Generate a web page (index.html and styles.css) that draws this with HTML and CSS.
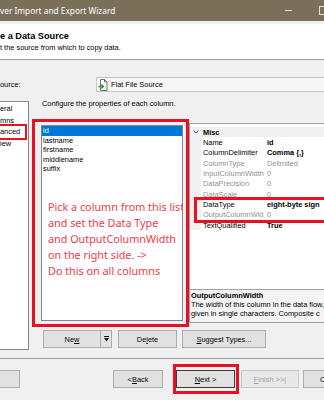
FILE: index.html
```html
<!DOCTYPE html>
<html lang="en">
<head>
    <meta charset="UTF-8">
    <title>SQL Server Import and Export Wizard</title>
    <link rel="stylesheet" href="styles.css">
</head>
<body>
<div class="window">
    <div class="titlebar">
        <span class="title">ver Import and Export Wizard</span>
        <span class="win-min"></span>
        <span class="win-max"></span>
    </div>

    <div class="header">
        <div class="header-title">e a Data Source</div>
        <div class="header-sub">t the source from which to copy data.</div>
    </div>

    <div class="body">
        <div class="source-row">
            <span class="source-label">ource:</span>
            <div class="combo">
                <svg class="combo-icon" width="10" height="12" viewBox="0 0 10 12">
                    <path d="M2.5 .5h4l2.5 2.5v8.5h-6.5z" fill="#fff" stroke="#707070"/>
                    <path d="M6.5 .5v2.5h2.5" fill="none" stroke="#707070"/>
                    <path d="M.5 7.5h4.5M3.5 5.5l2 2-2 2" fill="none" stroke="#2f9a3a" stroke-width="1.4"/>
                </svg>
                <span>Flat File Source</span>
            </div>
        </div>

        <div class="main">
            <ul class="nav">
                <li>eral</li>
                <li>mns</li>
                <li class="nav-active">anced</li>
                <li>iew</li>
            </ul>

            <div class="content">
                <p class="hint">Configure the properties of each column.</p>

                <div class="panels">
                    <div class="list-frame">
                        <div class="list">
                            <div class="list-item selected">id</div>
                            <div class="list-item">lastname</div>
                            <div class="list-item">firstname</div>
                            <div class="list-item">middlename</div>
                            <div class="list-item">suffix</div>
                            <div class="note">
                                Pick a column from this list<br>
                                and set the Data Type<br>
                                and OutputColumnWidth<br>
                                on the right side. -&gt;<br>
                                Do this on all columns
                            </div>
                        </div>
                    </div>

                    <div class="props">
                        <div class="grid">
                            <div class="prop-row group">
                                <span class="gutter">
                                    <svg width="6" height="4" viewBox="0 0 6 4"><path d="M.5 .5l2.5 2.5 2.5-2.5" fill="none" stroke="#555"/></svg>
                                </span>
                                <span class="pname strong">Misc</span>
                            </div>
                            <div class="prop-row"><span class="gutter"></span><span class="pname">Name</span><span class="pval strong">id</span></div>
                            <div class="prop-row"><span class="gutter"></span><span class="pname">ColumnDelimiter</span><span class="pval strong">Comma {,}</span></div>
                            <div class="prop-row muted"><span class="gutter"></span><span class="pname">ColumnType</span><span class="pval">Delimited</span></div>
                            <div class="prop-row muted"><span class="gutter"></span><span class="pname">InputColumnWidth</span><span class="pval">0</span></div>
                            <div class="prop-row muted"><span class="gutter"></span><span class="pname">DataPrecision</span><span class="pval">0</span></div>
                            <div class="prop-row muted"><span class="gutter"></span><span class="pname">DataScale</span><span class="pval">0</span></div>
                            <div class="prop-row"><span class="gutter"></span><span class="pname">DataType</span><span class="pval strong">eight-byte sign</span></div>
                            <div class="prop-row muted"><span class="gutter"></span><span class="pname">OutputColumnWid</span><span class="pval">0</span></div>
                            <div class="prop-row"><span class="gutter"></span><span class="pname">TextQualified</span><span class="pval strong">True</span></div>
                        </div>
                        <div class="desc">
                            <div class="strong">OutputColumnWidth</div>
                            <div>The width of this column in the data flow,</div>
                            <div>given in single characters. Composite c</div>
                        </div>
                        <div class="mark"></div>
                    </div>
                </div>

                <div class="actions">
                    <button class="btn btn-new">Ne<u>w</u></button>
                    <button class="btn btn-split">
                        <svg width="5" height="6" viewBox="0 0 5 6"><path d="M0 0h5v1H0zM0 2h5L2.5 5.5z" fill="#111"/></svg>
                    </button>
                    <button class="btn btn-delete">De<u>l</u>ete</button>
                    <button class="btn btn-suggest"><u>S</u>uggest Types...</button>
                </div>
            </div>
        </div>

        <div class="footer">
            <button class="btn btn-help"></button>
            <button class="btn btn-back">&lt; <u>B</u>ack</button>
            <div class="next-mark">
                <button class="btn btn-next"><u>N</u>ext &gt;</button>
            </div>
            <button class="btn btn-finish" disabled><u>F</u>inish &gt;&gt;|</button>
            <button class="btn btn-cancel">C</button>
        </div>
    </div>
</div>
</body>
</html>
```

FILE: styles.css
```css
body {
    margin: 0;
    font-family: "Liberation Sans", Arial, sans-serif;
    font-size: 7.4px;
    color: #000000;
    background: #F0F0F0;
}
.window {
    width: 324px;
    height: 400px;
    overflow: hidden;
    display: flex;
    flex-direction: column;
}

/* title bar */
.titlebar {
    height: 21px;
    flex-shrink: 0;
    background: #7B6F5A;
    display: flex;
    align-items: center;
}
.title {
    font-family: "Noto Sans", sans-serif;
    font-size: 8.3px;
    color: #FFFFFF;
    white-space: nowrap;
}
.win-min {
    margin-left: auto;
    margin-right: 27px;
    width: 7px;
    height: 1px;
    background: #E6E1D6;
    flex-shrink: 0;
}
.win-max {
    width: 7px;
    height: 7px;
    border: 1px solid #E6E1D6;
    margin-right: -4px;
    flex-shrink: 0;
}

/* header */
.header {
    flex-shrink: 0;
    background: #FFFFFF;
    border-top: 3px solid #F0F0F0;
    border-bottom: 1px solid #A0A0A0;
    padding-top: 5px;
    height: 30px;
}
.header-title {
    font-weight: 700;
    font-size: 9.2px;
    line-height: 14px;
    white-space: nowrap;
}
.header-sub {
    line-height: 10px;
    white-space: nowrap;
}

/* body */
.body {
    flex: 1;
    display: flex;
    flex-direction: column;
}
.source-row {
    height: 36px;
    padding-top: 17px;
    box-sizing: border-box;
    display: flex;
    align-items: flex-start;
}
.source-label {
    width: 96px;
    line-height: 15px;
    flex-shrink: 0;
}
.combo {
    width: 240px;
    height: 15px;
    flex-shrink: 0;
    box-sizing: border-box;
    border: 1px solid #C6C6C6;
    background: #F6F6F6;
    display: flex;
    align-items: center;
    gap: 3px;
    padding-left: 1px;
}

.main {
    height: 254px;
    display: flex;
}
.nav {
    list-style: none;
    margin: 5px 0 0;
    padding: 1px 0 0;
    width: 29px;
    flex-shrink: 0;
    box-sizing: border-box;
    background: #FFFFFF;
    border: 1px solid #828790;
    border-left: none;
}
.nav li {
    line-height: 11.5px;
    white-space: nowrap;
}
.nav .nav-active {
    margin-right: 3px;
    outline: 2px solid #E81123;
}

.content {
    margin-left: 3px;
    flex: 1;
    display: flex;
    flex-direction: column;
}
.hint {
    margin: 0;
    padding: 3px 0 0 10px;
    line-height: 10px;
    white-space: nowrap;
}
.panels {
    margin-top: 10px;
    height: 208px;
    display: flex;
    align-items: flex-start;
}

/* column list with the note */
.list-frame {
    width: 157px;
    height: 208px;
    flex-shrink: 0;
    box-sizing: border-box;
    border: 3px solid #E81123;
    padding: 3px 3px 3px 6px;
}
.list {
    height: 100%;
    box-sizing: border-box;
    background: #FFFFFF;
    border: 1px solid #828790;
    overflow: hidden;
}
.list-item {
    height: 9.5px;
    line-height: 9.5px;
    padding-left: 1px;
}
.list-item.selected {
    background: #0078D7;
    color: #FFFFFF;
}
.note {
    margin-top: 25.5px;
    padding-left: 6px;
    font-family: "Noto Sans", sans-serif;
    font-size: 10.8px;
    line-height: 16px;
    color: #F03A47;
    white-space: nowrap;
}

/* property grid */
.props {
    position: relative;
    margin-top: 4px;
    width: 136px;
    height: 200px;
    flex-shrink: 0;
    box-sizing: border-box;
    border: 1px solid #A0A0A0;
    border-right: none;
    background: #FFFFFF;
    display: flex;
    flex-direction: column;
}
.grid {
    flex: 1;
    padding-top: 3px;
}
.prop-row {
    height: 10.33px;
    display: flex;
    align-items: center;
    white-space: nowrap;
}
.prop-row.group {
    background: #F0F0F0;
}
.gutter {
    width: 11px;
    height: 100%;
    flex-shrink: 0;
    background: #F0F0F0;
    display: flex;
    align-items: center;
    justify-content: center;
}
.pname {
    width: 62px;
    padding-left: 2px;
    flex-shrink: 0;
    overflow: hidden;
}
.pval {
    padding-left: 2px;
    overflow: hidden;
}
.strong {
    font-weight: 700;
}
.muted {
    color: #8F8F8F;
}
.desc {
    height: 33px;
    box-sizing: border-box;
    border-top: 1px solid #A0A0A0;
    background: #F4F4F4;
    padding: 1px 0 0 1px;
    line-height: 9px;
    white-space: nowrap;
    overflow: hidden;
}
.mark {
    position: absolute;
    left: 4px;
    top: 73px;
    width: 136px;
    height: 26px;
    box-sizing: border-box;
    border: 3px solid #E81123;
    border-right: none;
}

/* buttons */
.btn {
    height: 18px;
    box-sizing: border-box;
    border: 1px solid #ADADAD;
    background: #E1E1E1;
    font-family: "Liberation Sans", Arial, sans-serif;
    font-size: 7.4px;
    color: #000000;
    padding: 0;
    flex-shrink: 0;
    display: flex;
    align-items: center;
    justify-content: center;
}
.actions {
    margin-top: 3px;
    padding-left: 11px;
    display: flex;
}
.btn-new { width: 58px; }
.btn-split { width: 11px; border-left: none; }
.btn-delete { width: 59px; margin-left: 6px; }
.btn-suggest { width: 84px; margin-left: 5px; }

.footer {
    margin-top: 8px;
    border-top: 1px solid #A0A0A0;
    padding-top: 5px;
    height: 30px;
    display: flex;
    align-items: center;
}
.btn-help { width: 20px; border-left: none; }
.btn-back { width: 50px; margin-left: 93px; }
.next-mark {
    margin-left: 10px;
    width: 66px;
    height: 30px;
    flex-shrink: 0;
    box-sizing: border-box;
    border: 3px solid #E81123;
    padding-right: 1px;
    display: flex;
    align-items: center;
}
.btn-next {
    width: 59px;
    border-color: #3C3C3C;
}
.btn-finish {
    width: 58px;
    margin-left: 2px;
    color: #A0A0A0;
    background: #E8E8E8;
    border-color: #C8C8C8;
}
.btn-cancel {
    width: 21px;
    margin-left: 4px;
    border-right: none;
    justify-content: flex-start;
    padding-left: 16px;
}
```
